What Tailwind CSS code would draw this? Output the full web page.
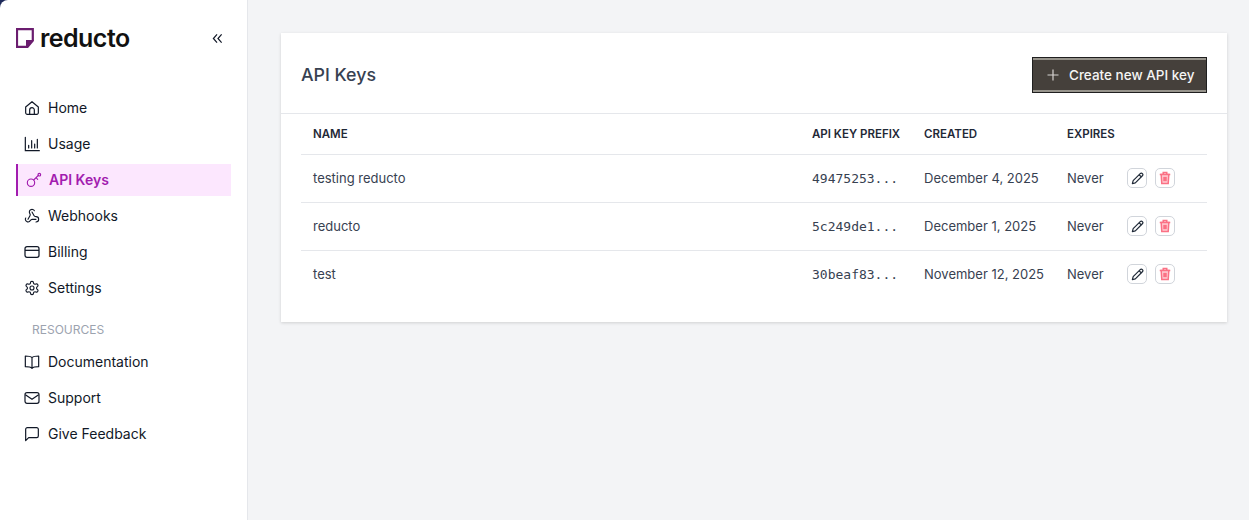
<!DOCTYPE html>
<html lang="en">
<head>
    <meta charset="UTF-8">
    <title>Reducto | API Keys</title>
    <script src="https://cdn.jsdelivr.net/npm/@tailwindcss/browser@4"></script>
</head>
<body class="bg-[#f3f4f6] font-['Inter',sans-serif] h-[520px] overflow-hidden">
    <div class="flex h-[520px]">
        <!-- SIDEBAR -->
        <div class="w-[248px] shrink-0 bg-[#1e2a5a]">
        <aside class="h-full bg-white border-r border-[#e5e7eb] rounded-tl-[8px] px-4 pt-[26px]">
            <div class="flex items-center justify-between h-6 pr-[8px]">
                <div class="flex items-center gap-[6px]">
                    <svg width="18" height="20" viewBox="0 0 18 20" fill="none">
                        <path d="M1 1.2H16.8V12.5L11.5 18.8H1Z" stroke="#6b1d6f" stroke-width="2.2"/>
                        <path d="M10 20V12H18Z" fill="#6b1d6f"/>
                    </svg>
                    <span class="text-[25px] font-semibold text-[#111111] tracking-[-0.55px] leading-6">reducto</span>
                </div>
                <svg width="11" height="11" viewBox="0 0 12 12" fill="none" stroke="#111827" stroke-width="1.3"><path d="M5.5 1.5 1.5 6l4 4.5M10.5 1.5 6.5 6l4 4.5"/></svg>
            </div>
            <nav class="mt-[42px] text-sm text-[#111827]">
                <a class="flex items-center gap-2 h-8 mb-1 pl-2">
                    <svg width="16" height="16" viewBox="0 0 24 24" fill="none" stroke="currentColor" stroke-width="1.8" stroke-linecap="round" stroke-linejoin="round"><path d="M2.5 10.5 12 2.5l9.5 8V19a2.5 2.5 0 0 1-2.5 2.5H5A2.5 2.5 0 0 1 2.5 19Z"/><path d="M8.5 21.5V15a3.5 3.5 0 0 1 7 0v6.5"/></svg>
                    Home
                </a>
                <a class="flex items-center gap-2 h-8 mb-1 pl-2">
                    <svg width="16" height="16" viewBox="0 0 24 24" fill="none" stroke="currentColor" stroke-width="1.8" stroke-linecap="round"><path d="M2 2v20h21M7 18v-4M11.5 18V7M16 18v-6M20 18V5"/></svg>
                    Usage
                </a>
                <a class="flex items-center gap-[7px] h-8 mb-1 pl-2 bg-[#fce7fe] border-l-2 border-[#a21caf] text-[#a21caf] font-semibold">
                    <svg width="16" height="16" viewBox="0 0 24 24" fill="none" stroke="currentColor" stroke-width="1.7" stroke-linecap="round"><circle cx="7.5" cy="16" r="5.5"/><path d="m11.5 12 7-7M15 8.5l2.5 2.5"/><circle cx="20" cy="4" r="2"/></svg>
                    API Keys
                </a>
                <a class="flex items-center gap-2 h-8 mb-1 pl-2">
                    <svg width="16" height="16" viewBox="0 0 24 24" fill="none" stroke="currentColor" stroke-width="1.7" stroke-linecap="round" stroke-linejoin="round"><path d="M18 16.98h-5.99c-1.1 0-1.95.94-2.48 1.9A4 4 0 0 1 2 17c.01-.7.2-1.4.57-2"/><path d="m6 17 3.13-5.78c.53-.97.1-2.18-.5-3.1a4 4 0 1 1 6.89-4.06"/><path d="m12 6 3.13 5.73C15.66 12.7 16.9 13 18 13a4 4 0 0 1 0 8"/></svg>
                    Webhooks
                </a>
                <a class="flex items-center gap-2 h-8 mb-1 pl-2">
                    <svg width="16" height="16" viewBox="0 0 24 24" fill="none" stroke="currentColor" stroke-width="1.9"><rect x="1.5" y="4" width="21" height="16" rx="3"/><path d="M1.5 9.5h21"/></svg>
                    Billing
                </a>
                <a class="flex items-center gap-2 h-8 pl-2">
                    <svg width="16" height="16" viewBox="0 0 24 24" fill="none" stroke="currentColor" stroke-width="1.7" stroke-linecap="round" stroke-linejoin="round"><path d="M12.22 2h-.44a2 2 0 0 0-2 2v.18a2 2 0 0 1-1 1.73l-.43.25a2 2 0 0 1-2 0l-.15-.08a2 2 0 0 0-2.73.73l-.22.38a2 2 0 0 0 .73 2.73l.15.1a2 2 0 0 1 1 1.72v.51a2 2 0 0 1-1 1.74l-.15.09a2 2 0 0 0-.73 2.73l.22.38a2 2 0 0 0 2.73.73l.15-.08a2 2 0 0 1 2 0l.43.25a2 2 0 0 1 1 1.73V20a2 2 0 0 0 2 2h.44a2 2 0 0 0 2-2v-.18a2 2 0 0 1 1-1.73l.43-.25a2 2 0 0 1 2 0l.15.08a2 2 0 0 0 2.73-.73l.22-.39a2 2 0 0 0-.73-2.73l-.15-.08a2 2 0 0 1-1-1.74v-.5a2 2 0 0 1 1-1.74l.15-.09a2 2 0 0 0 .73-2.73l-.22-.38a2 2 0 0 0-2.73-.73l-.15.08a2 2 0 0 1-2 0l-.43-.25a2 2 0 0 1-1-1.73V4a2 2 0 0 0-2-2z"/><circle cx="12" cy="12" r="3"/></svg>
                    Settings
                </a>
                <div class="mt-[18px] mb-2 pl-4 text-xs leading-4 text-[#9ca3af]">RESOURCES</div>
                <a class="flex items-center gap-2 h-8 mb-1 pl-2">
                    <svg width="16" height="16" viewBox="0 0 24 24" fill="none" stroke="currentColor" stroke-width="1.8" stroke-linejoin="round"><path d="M12 5.5C10 3.5 7 3 2 3v16c5 0 8 .5 10 2.5 2-2 5-2.5 10-2.5V3c-5 0-8 .5-10 2.5ZM12 5.5v16"/></svg>
                    Documentation
                </a>
                <a class="flex items-center gap-2 h-8 mb-1 pl-2">
                    <svg width="16" height="16" viewBox="0 0 24 24" fill="none" stroke="currentColor" stroke-width="1.8" stroke-linejoin="round"><rect x="1.5" y="4" width="21" height="16" rx="3"/><path d="m2 7 10 7 10-7"/></svg>
                    Support
                </a>
                <a class="flex items-center gap-2 h-8 pl-2">
                    <svg width="16" height="16" viewBox="0 0 24 24" fill="none" stroke="currentColor" stroke-width="1.8" stroke-linejoin="round"><path d="M2.5 22V5a2.5 2.5 0 0 1 2.5-2.5h14A2.5 2.5 0 0 1 21.5 5v10a2.5 2.5 0 0 1-2.5 2.5H7Z"/></svg>
                    Give Feedback
                </a>
            </nav>
        </aside>
        </div>

        <!-- MAIN -->
        <main class="flex-1 pt-[33px] pl-[33px] pr-[22px]">
            <section class="bg-white shadow-[0_1px_3px_rgba(0,0,0,0.15)] h-[289px]">
                <div class="flex items-center justify-between h-[81px] pt-1 px-5 border-b border-[#e5e7eb]">
                    <h1 class="text-[17.8px] font-medium text-[#374151]">API Keys</h1>
                    <button class="flex items-center w-[175px] h-9 pl-[14px] bg-[#45403b] border border-[#1f1f1f] shadow-[inset_0_2px_0_#97948c,inset_0_-2px_0_#97948c] text-[13.5px] font-medium text-[#f5f5f4]">
                        <svg class="mr-[10px]" width="12" height="12" viewBox="0 0 12 12" stroke="#d6d3d1" stroke-width="1.2"><path d="M6 .5v11M.5 6h11"/></svg>
                        Create new API key
                    </button>
                </div>
                <div class="px-5">
                    <table class="w-[906px] border-collapse table-fixed text-[13px] text-[#374151]">
                        <colgroup>
                            <col class="w-[511px]"><col class="w-[112px]"><col class="w-[143px]"><col class="w-[60px]"><col>
                        </colgroup>
                        <thead>
                            <tr class="h-10 border-b border-[#e5e7eb] text-left text-[11.5px] text-[#1f2937]">
                                <th class="pl-3 pt-[2px] font-semibold">NAME</th>
                                <th class="pt-[2px] font-semibold whitespace-nowrap">API KEY PREFIX</th>
                                <th class="pt-[2px] font-semibold">CREATED</th>
                                <th class="pt-[2px] font-semibold">EXPIRES</th>
                                <th></th>
                            </tr>
                        </thead>
                        <tbody>
                            <tr class="h-12 border-b border-[#e5e7eb]">
                                <td class="pl-3 pt-[2px]">testing reducto</td>
                                <td class="pt-[2px] font-['DejaVu_Sans_Mono',monospace]">49475253...</td>
                                <td class="pt-[2px]">December 4, 2025</td>
                                <td class="pt-[2px]">Never</td>
                                <td>
                                    <div class="flex gap-2">
                                        <button class="w-5 h-5 flex items-center justify-center border border-[#d1d5db] rounded-[5px] text-[#1f2937]">
                                            <svg width="13" height="13" viewBox="0 0 24 24" fill="none" stroke="currentColor" stroke-width="2.2" stroke-linejoin="round"><path d="M2.5 21.5l1.5-5.5L17 3a2.8 2.8 0 0 1 4 4L8 20Z"/><path d="m15 5 4 4"/></svg>
                                        </button>
                                        <button class="w-5 h-5 flex items-center justify-center border border-[#d1d5db] rounded-[5px] text-[#fb7185]">
                                            <svg width="14" height="14" viewBox="0 0 24 24" fill="none" stroke="currentColor" stroke-width="2.6"><path d="M3 6h18M9 6V2.5h6V6"/><path d="M5.5 6l1 15.5h11l1-15.5Z" fill="#fecdd3"/><rect x="9" y="10" width="6" height="7.5" fill="currentColor" stroke="none"/></svg>
                                        </button>
                                    </div>
                                </td>
                            </tr>
                            <tr class="h-12 border-b border-[#e5e7eb]">
                                <td class="pl-3 pt-[2px]">reducto</td>
                                <td class="pt-[2px] font-['DejaVu_Sans_Mono',monospace]">5c249de1...</td>
                                <td class="pt-[2px]">December 1, 2025</td>
                                <td class="pt-[2px]">Never</td>
                                <td>
                                    <div class="flex gap-2">
                                        <button class="w-5 h-5 flex items-center justify-center border border-[#d1d5db] rounded-[5px] text-[#1f2937]">
                                            <svg width="13" height="13" viewBox="0 0 24 24" fill="none" stroke="currentColor" stroke-width="2.2" stroke-linejoin="round"><path d="M2.5 21.5l1.5-5.5L17 3a2.8 2.8 0 0 1 4 4L8 20Z"/><path d="m15 5 4 4"/></svg>
                                        </button>
                                        <button class="w-5 h-5 flex items-center justify-center border border-[#d1d5db] rounded-[5px] text-[#fb7185]">
                                            <svg width="14" height="14" viewBox="0 0 24 24" fill="none" stroke="currentColor" stroke-width="2.6"><path d="M3 6h18M9 6V2.5h6V6"/><path d="M5.5 6l1 15.5h11l1-15.5Z" fill="#fecdd3"/><rect x="9" y="10" width="6" height="7.5" fill="currentColor" stroke="none"/></svg>
                                        </button>
                                    </div>
                                </td>
                            </tr>
                            <tr class="h-12">
                                <td class="pl-3">test</td>
                                <td class="font-['DejaVu_Sans_Mono',monospace]">30beaf83...</td>
                                <td>November 12, 2025</td>
                                <td>Never</td>
                                <td>
                                    <div class="flex gap-2">
                                        <button class="w-5 h-5 flex items-center justify-center border border-[#d1d5db] rounded-[5px] text-[#1f2937]">
                                            <svg width="13" height="13" viewBox="0 0 24 24" fill="none" stroke="currentColor" stroke-width="2.2" stroke-linejoin="round"><path d="M2.5 21.5l1.5-5.5L17 3a2.8 2.8 0 0 1 4 4L8 20Z"/><path d="m15 5 4 4"/></svg>
                                        </button>
                                        <button class="w-5 h-5 flex items-center justify-center border border-[#d1d5db] rounded-[5px] text-[#fb7185]">
                                            <svg width="14" height="14" viewBox="0 0 24 24" fill="none" stroke="currentColor" stroke-width="2.6"><path d="M3 6h18M9 6V2.5h6V6"/><path d="M5.5 6l1 15.5h11l1-15.5Z" fill="#fecdd3"/><rect x="9" y="10" width="6" height="7.5" fill="currentColor" stroke="none"/></svg>
                                        </button>
                                    </div>
                                </td>
                            </tr>
                        </tbody>
                    </table>
                </div>
            </section>
        </main>
    </div>
</body>
</html>
